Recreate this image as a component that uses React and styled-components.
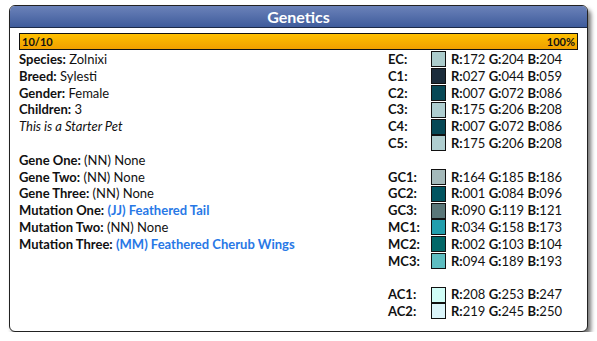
import React from "react";
import styled, { createGlobalStyle } from "styled-components";

const Global = createGlobalStyle`
  html, body { margin: 0; padding: 0; background: #fff; }
  body { font-family: Lato, "Open Sans", sans-serif; color: #111; }
`;

const Page = styled.div`
  padding: 5px 9px 0 9px;
  width: 579px;
`;

const Panel = styled.section`
  border: 1px solid #222;
  border-radius: 6px;
  background: #fff;
  box-shadow: 3px 4px 4px rgba(0, 0, 0, 0.55);
  height: 325px;
  overflow: hidden;
`;

const Header = styled.h2`
  margin: 0;
  height: 21px;
  line-height: 21px;
  text-align: center;
  font-size: 16px;
  font-weight: 700;
  color: #fff;
  background: linear-gradient(#6b82b9, #3f5c9c);
  border-bottom: 1px solid #1c2a48;
`;

const Body = styled.div`
  padding: 5px 9px 0 9px;
`;

const Bar = styled.div`
  height: 15px;
  border: 1px solid #111;
  background: linear-gradient(#ffc000, #f0a000);
  display: flex;
  justify-content: space-between;
  align-items: center;
  padding: 0 2px;
  font-size: 11px;
  font-weight: 700;
  color: #111;
`;

const Columns = styled.div`
  display: grid;
  grid-template-columns: 369px 1fr;
  margin-top: 1px;
  font-size: 13px;
  line-height: 16.8px;
`;

const Line = styled.div`
  min-height: 16.8px;
  white-space: nowrap;
  font-style: ${(p) => (p.$italic ? "italic" : "normal")};
`;

const Label = styled.b`
  font-weight: 700;
`;

const Link = styled.span`
  color: #2878e6;
  font-weight: 700;
`;

const ColorGrid = styled.div`
  display: grid;
  grid-template-columns: 43px 20px auto;
  align-items: center;
  white-space: nowrap;
`;

const ColorLabel = styled.div`
  font-weight: 700;
  height: 16.8px;
`;

const Swatch = styled.div`
  width: 13px;
  height: 14px;
  border: 1px solid #111;
  background: ${(p) => p.$c};
`;

const Spacer = styled.div`
  grid-column: 1 / -1;
  height: 16.8px;
`;

const pad = (n) => String(n).padStart(3, "0");

const colorGroups = [
  [
    ["EC", 172, 204, 204],
    ["C1", 27, 44, 59],
    ["C2", 7, 72, 86],
    ["C3", 175, 206, 208],
    ["C4", 7, 72, 86],
    ["C5", 175, 206, 208],
  ],
  [
    ["GC1", 164, 185, 186],
    ["GC2", 1, 84, 96],
    ["GC3", 90, 119, 121],
    ["MC1", 34, 158, 173],
    ["MC2", 2, 103, 104],
    ["MC3", 94, 189, 193],
  ],
  [
    ["AC1", 208, 253, 247],
    ["AC2", 219, 245, 250],
  ],
];

export default function App() {
  return (
    <>
      <Global />
      <Page>
        <Panel>
          <Header>Genetics</Header>
          <Body>
            <Bar>
              <span>10/10</span>
              <span>100%</span>
            </Bar>
            <Columns>
              <div>
                <Line><Label>Species:</Label> Zolnixi</Line>
                <Line><Label>Breed:</Label> Sylesti</Line>
                <Line><Label>Gender:</Label> Female</Line>
                <Line><Label>Children:</Label> 3</Line>
                <Line $italic>This is a Starter Pet</Line>
                <Line />
                <Line><Label>Gene One:</Label> (NN) None</Line>
                <Line><Label>Gene Two:</Label> (NN) None</Line>
                <Line><Label>Gene Three:</Label> (NN) None</Line>
                <Line><Label>Mutation One:</Label> <Link>(JJ) Feathered Tail</Link></Line>
                <Line><Label>Mutation Two:</Label> (NN) None</Line>
                <Line><Label>Mutation Three:</Label> <Link>(MM) Feathered Cherub Wings</Link></Line>
              </div>
              <ColorGrid>
                {colorGroups.map((g, gi) => (
                  <React.Fragment key={gi}>
                    {gi > 0 && <Spacer />}
                    {g.map(([name, r, gg, b]) => (
                      <React.Fragment key={name}>
                        <ColorLabel>{name}:</ColorLabel>
                        <Swatch $c={`rgb(${r},${gg},${b})`} />
                        <div>
                          <Label>R:</Label>{pad(r)} <Label>G:</Label>{pad(gg)} <Label>B:</Label>{pad(b)}
                        </div>
                      </React.Fragment>
                    ))}
                  </React.Fragment>
                ))}
              </ColorGrid>
            </Columns>
          </Body>
        </Panel>
      </Page>
    </>
  );
}
